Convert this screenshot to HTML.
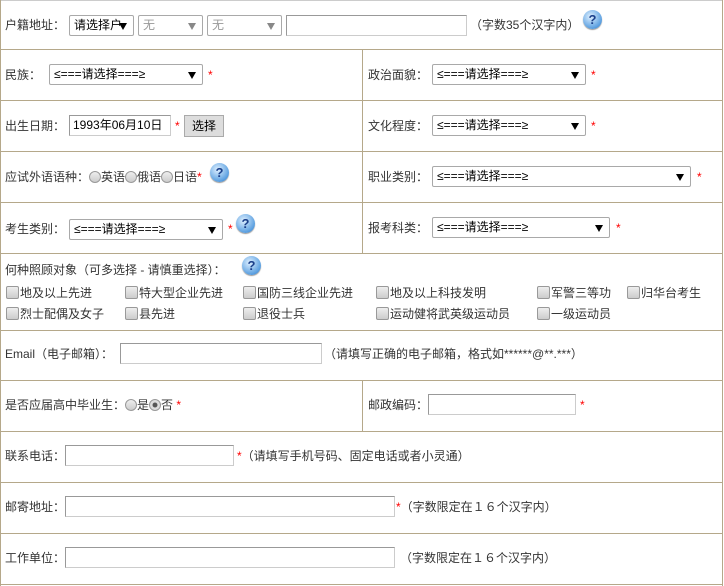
<!DOCTYPE html>
<html><head><meta charset="utf-8"><style>
*{margin:0;padding:0;box-sizing:border-box}
body{width:724px;height:586px;background:#fff;font-family:"Liberation Sans","Noto Sans CJK SC",sans-serif;font-size:12px;color:#333;position:relative;overflow:hidden}
.a{position:absolute;white-space:nowrap;line-height:16px}
.h{position:absolute;left:0;width:723px;height:1px;background:#b5a88a}
.v{position:absolute;width:1px;background:#b5a88a}
.s{position:absolute;height:21px;border:1px solid #a9a9a9;border-radius:2px;background:#fff;color:#000;padding:2px 4px;line-height:15px;white-space:nowrap;overflow:hidden}
.s:after{content:"";position:absolute;right:6px;top:7px;border-left:4px solid transparent;border-right:4px solid transparent;border-top:7px solid #000}
.s.g{color:#999}.s.g:after{border-top-color:#888}
.i{position:absolute;height:21px;border:1px solid #ccc;border-top-color:#999;border-left-color:#999;background:#fff;padding:2px 3px;line-height:15px}
.r{color:#f00}
.q{position:absolute;width:19px;height:19px;border-radius:50%;background:radial-gradient(circle at 40% 35%,#dff0ff,#5a9fe0 70%,#2c6cb5);color:#1a3f8a;font-weight:bold;font-size:13px;text-align:center;line-height:19px;box-shadow:0 1px 1px #999}
.c{display:inline-block;width:13px;height:13px;border:1px solid #999;border-radius:2px;background:linear-gradient(#eee,#ccc);vertical-align:-2px;margin-right:1px}
.o{display:inline-block;width:12px;height:12px;border:1px solid #999;border-radius:50%;background:linear-gradient(#eee,#ccc);vertical-align:-2px}
.o.on{background:radial-gradient(circle,#555 30%,#ddd 40%)}
</style></head><body>
<div class="h" style="top:0;background:#ccc"></div>
<div class="h" style="top:49px"></div><div class="h" style="top:100px"></div><div class="h" style="top:151px"></div><div class="h" style="top:202px"></div><div class="h" style="top:253px"></div><div class="h" style="top:330px"></div><div class="h" style="top:380px"></div><div class="h" style="top:431px"></div><div class="h" style="top:482px"></div><div class="h" style="top:533px"></div><div class="h" style="top:584px"></div>
<div class="v" style="left:0;top:0;height:586px"></div><div class="v" style="left:722px;top:0;height:586px"></div>
<div class="v" style="left:362px;top:49px;height:204px"></div><div class="v" style="left:362px;top:380px;height:51px"></div>

<div class="a" style="left:5px;top:17px">户籍地址：</div>
<div class="s" style="left:69px;top:15px;width:65px">请选择户</div>
<div class="s g" style="left:138px;top:15px;width:65px">无</div>
<div class="s g" style="left:207px;top:15px;width:75px">无</div>
<div class="i" style="left:286px;top:15px;width:181px"></div>
<div class="a" style="left:470px;top:17px">（字数35个汉字内）</div>
<div class="q" style="left:583px;top:10px">?</div>

<div class="a" style="left:5px;top:67px">民族：</div>
<div class="s" style="left:49px;top:64px;width:154px">≤===请选择===≥</div><span class="a r" style="left:208px;top:67px">*</span>
<div class="a" style="left:368px;top:67px">政治面貌：</div>
<div class="s" style="left:432px;top:64px;width:154px">≤===请选择===≥</div><span class="a r" style="left:591px;top:67px">*</span>

<div class="a" style="left:5px;top:118px">出生日期：</div>
<div class="i" style="left:69px;top:115px;width:102px;color:#000">1993年06月10日</div><span class="a r" style="left:175px;top:118px">*</span>
<div class="a" style="left:184px;top:115px;width:40px;height:22px;border:1px solid #aaa;background:#ddd;color:#000;text-align:center;line-height:20px">选择</div>
<div class="a" style="left:368px;top:118px">文化程度：</div>
<div class="s" style="left:432px;top:115px;width:154px">≤===请选择===≥</div><span class="a r" style="left:591px;top:118px">*</span>

<div class="a" style="left:5px;top:169px">应试外语语种：<span class="o"></span>英语<span class="o"></span>俄语<span class="o"></span>日语<span class="r">*</span></div>
<div class="q" style="left:210px;top:163px">?</div>
<div class="a" style="left:368px;top:169px">职业类别：</div>
<div class="s" style="left:432px;top:166px;width:259px">≤===请选择===≥</div><span class="a r" style="left:697px;top:169px">*</span>

<div class="a" style="left:5px;top:221px">考生类别：</div>
<div class="s" style="left:69px;top:219px;width:154px">≤===请选择===≥</div><span class="a r" style="left:228px;top:221px">*</span>
<div class="q" style="left:236px;top:214px">?</div>
<div class="a" style="left:368px;top:220px">报考科类：</div>
<div class="s" style="left:432px;top:217px;width:178px">≤===请选择===≥</div><span class="a r" style="left:616px;top:220px">*</span>

<div class="a" style="left:5px;top:262px">何种照顾对象（可多选择 - 请慎重选择）：</div>
<div class="q" style="left:242px;top:256px">?</div>
<div class="a" style="left:6px;top:285px"><span class="c"></span>地及以上先进</div>
<div class="a" style="left:125px;top:285px"><span class="c"></span>特大型企业先进</div>
<div class="a" style="left:243px;top:285px"><span class="c"></span>国防三线企业先进</div>
<div class="a" style="left:376px;top:285px"><span class="c"></span>地及以上科技发明</div>
<div class="a" style="left:537px;top:285px"><span class="c"></span>军警三等功</div>
<div class="a" style="left:627px;top:285px"><span class="c"></span>归华台考生</div>
<div class="a" style="left:6px;top:306px"><span class="c"></span>烈士配偶及女子</div>
<div class="a" style="left:125px;top:306px"><span class="c"></span>县先进</div>
<div class="a" style="left:243px;top:306px"><span class="c"></span>退役士兵</div>
<div class="a" style="left:376px;top:306px"><span class="c"></span>运动健将武英级运动员</div>
<div class="a" style="left:537px;top:306px"><span class="c"></span>一级运动员</div>

<div class="a" style="left:5px;top:346px">Email（电子邮箱）：</div>
<div class="i" style="left:120px;top:343px;width:202px"></div>
<div class="a" style="left:324px;top:346px">（请填写正确的电子邮箱，格式如******@**.***）</div>

<div class="a" style="left:5px;top:397px">是否应届高中毕业生：<span class="o"></span>是<span class="o on"></span>否 <span class="r">*</span></div>
<div class="a" style="left:368px;top:397px">邮政编码：</div>
<div class="i" style="left:428px;top:394px;width:148px"></div><span class="a r" style="left:580px;top:397px">*</span>

<div class="a" style="left:5px;top:448px">联系电话：</div>
<div class="i" style="left:65px;top:445px;width:169px"></div>
<div class="a" style="left:237px;top:448px"><span class="r">*</span>（请填写手机号码、固定电话或者小灵通）</div>

<div class="a" style="left:5px;top:499px">邮寄地址：</div>
<div class="i" style="left:65px;top:496px;width:330px"></div>
<div class="a" style="left:396px;top:499px"><span class="r">*</span>（字数限定在１６个汉字内）</div>

<div class="a" style="left:5px;top:550px">工作单位：</div>
<div class="i" style="left:65px;top:547px;width:330px"></div>
<div class="a" style="left:400px;top:550px">（字数限定在１６个汉字内）</div>
</body></html>
